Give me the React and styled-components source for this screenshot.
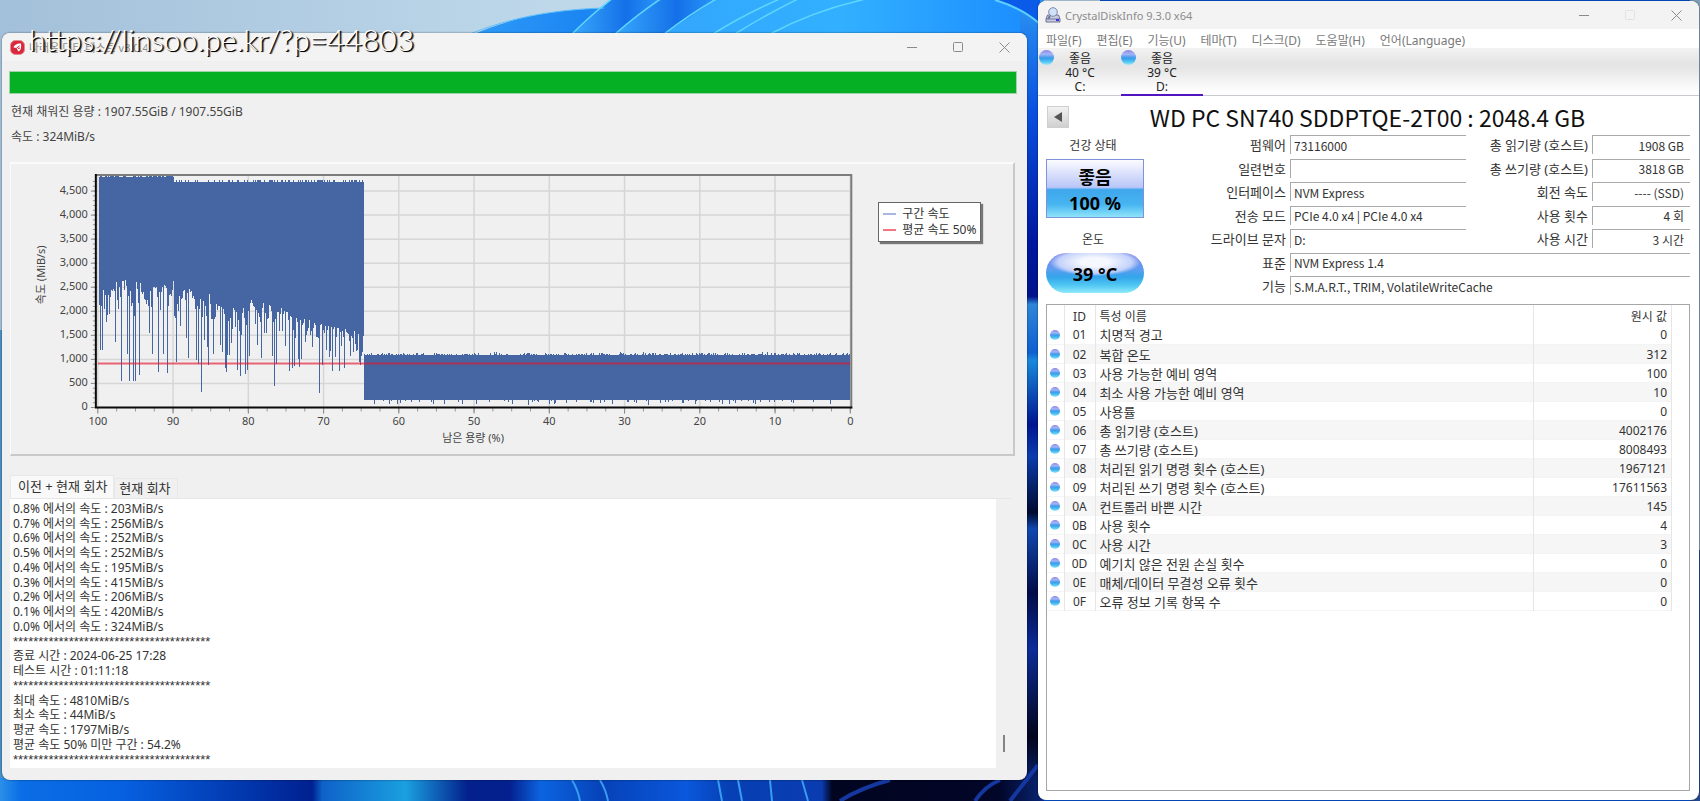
import React, { useState } from "react";
import styled, { createGlobalStyle } from "styled-components";

const FONT = '"Noto Sans", "Noto Sans CJK KR", sans-serif';
// Narrower latin letters
const FONT_NARROW = '"Noto Sans CJK KR", "Noto Sans", sans-serif';

const GlobalStyle = createGlobalStyle`
  * {
    box-sizing: border-box;
  }
  body {
    margin: 0;
    font-family: ${FONT};
    font-size: 12px;
    color: #333;
    background: #0453d6;
  }
  button, input {
    font-family: inherit;
    font-size: inherit;
    color: inherit;
    border: 0;
    margin: 0;
    padding: 0;
    background: none;
    outline: none;
  }
`;

const Desktop = styled.main`
  position: relative;
  display: grid;
  grid-template-columns: 1025fr 661fr;
  column-gap: 11px;
  min-height: 100vh;
  padding: 1px 1px 1px 2px;
  overflow: hidden;
`;

// Sits behind the windows
const WallpaperSvg = styled.svg`
  position: absolute;
  inset: 0;
  width: 100%;
  height: 100%;
`;

const Window = styled.section`
  position: relative;
  display: flex;
  flex-direction: column;
  min-width: 0;
  border-radius: 8px;
  overflow: hidden;
  background: ${(props) => props.$bg};
  box-shadow: 0 0 2px rgba(0, 0, 0, 0.6);
`;

const TestWindow = styled(Window)`
  margin: 32px 0 20px;
  padding-bottom: 12px;
`;

const TitleBar = styled.header`
  display: flex;
  align-items: center;
  gap: 4px;
  height: 28px;
  padding-left: ${(props) => props.$left};
  background: #f3f3f3;
  color: #8c8c8c;
`;

const TitleText = styled.h1`
  flex: 1;
  margin: 0;
  font-size: 11px;
  font-weight: 400;
  white-space: nowrap;
`;

const ButtonGroup = styled.div`
  display: flex;
`;

const WindowButton = styled.button`
  display: flex;
  align-items: center;
  justify-content: center;
  width: 46px;
  height: 28px;
  color: #8a8a8a;
  &:disabled {
    color: #e2e2e2;
  }
`;

// Link lies over the title bar of the window
const Watermark = styled.a`
  position: absolute;
  z-index: 2;
  left: 29px;
  top: 21px;
  font-family: Lato, "Open Sans", sans-serif;
  font-size: 30px;
  font-weight: 300;
  line-height: 36px;
  color: #fff;
  text-decoration: none;
  text-shadow: 1px 1px 0 #000, 2px 1px 1px #333;
`;

/* ---- dirty test window ---- */

const Progress = styled.progress`
  display: block;
  appearance: none;
  width: auto;
  height: 23px;
  margin: 10px 10px 5px 7px;
  border: 1px solid #9fd3a9;
  &::-webkit-progress-bar {
    background: #e6e6e6;
  }
  &::-webkit-progress-value {
    background: #06b025;
  }
`;

const StatusLine = styled.p`
  margin: 0 9px;
  line-height: 25px;
  color: #444;
`;

const ChartPanel = styled.div`
  display: grid;
  grid-template-columns: 860fr 144fr;
  margin: 13px 12px 0 8px;
  border-top: 2px solid #fafafa;
  border-left: 1px solid #fafafa;
  border-right: 2px solid #c9c9c9;
  border-bottom: 2px solid #c9c9c9;
`;

const ChartSvg = styled.svg`
  display: block;
  width: 100%;
  text {
    font-family: ${FONT};
    font-size: 11px;
    fill: #444;
  }
`;

const Legend = styled.ul`
  justify-self: start;
  align-self: start;
  display: flex;
  flex-direction: column;
  list-style: none;
  margin: 38px 0 0 9px;
  padding: 3px 4px;
  background: #fff;
  border: 1px solid #666;
  box-shadow: 2px 2px 1px #777;
`;

const LegendItem = styled.li`
  display: flex;
  align-items: center;
  gap: 6px;
  line-height: 16px;
  white-space: nowrap;
  &::before {
    content: "";
    width: 13px;
    height: 2px;
    background: ${(props) => props.$color};
  }
`;

const Tabs = styled.div`
  display: flex;
  align-items: flex-end;
  margin: 19px 0 0 8px;
`;

const Tab = styled.button`
  height: ${(props) => (props.$active ? "23px" : "20px")};
  padding: 0 6px 2px ${(props) => (props.$active ? "7px" : "4px")};
  background: ${(props) => (props.$active ? "#f9f9f9" : "#f0f0f0")};
  border: 1px solid #e8e8e8;
  border-bottom: 0;
  font-size: 13px;
  line-height: 16px;
  white-space: nowrap;
`;

const LogBox = styled.div`
  flex: 1;
  display: flex;
  margin: 0 15px 0 8px;
  border-top: 1px solid #e6e6e6;
  background: #fff;
`;

const Log = styled.div`
  flex: 1;
  display: grid;
  grid-auto-rows: 1fr;
  align-items: center;
  padding: 2px 3px 1px;
  white-space: nowrap;
`;

const LogLine = styled.div`
  line-height: 14px;
`;

const LogRule = styled(LogLine)`
  font-family: "Liberation Sans", sans-serif;
  font-size: 13px;
`;

const ScrollTrack = styled.div`
  display: flex;
  flex-direction: column;
  align-items: center;
  justify-content: flex-end;
  width: 16px;
  padding-bottom: 16px;
  background: #f0f0f0;
`;

const ScrollThumb = styled.div`
  width: 2px;
  height: 17px;
  background: #858585;
`;

/* ---- disk info window ---- */

const MenuBar = styled.nav`
  display: flex;
  gap: 15px;
  height: 19px;
  padding-left: 8px;
  background: #fff;
`;

const MenuButton = styled.button`
  color: #7a7a7a;
  line-height: 24px;
  white-space: nowrap;
`;

const DiskBar = styled.div`
  display: flex;
  height: 48px;
  padding-left: 1px;
  background: linear-gradient(#f2f2f2, #e4e4e4 35%, #e9e9e9 50%, #fbfbfb 85%, #fff);
  border-bottom: 1px solid #c8ccd0;
`;

const DiskButton = styled.button`
  display: grid;
  grid-template-columns: 15px 1fr 15px;
  align-items: start;
  width: 82px;
  border-bottom: 2px solid ${(props) => (props.$active ? "#5213c0" : "transparent")};
  margin-bottom: -1px;
  color: #222;
`;

const DiskText = styled.span`
  padding-top: 4px;
  line-height: 14px;
  white-space: nowrap;
`;

const Orb = styled.span`
  display: inline-block;
  width: ${(props) => props.$size};
  height: ${(props) => props.$size};
  margin-top: ${(props) => props.$top || "0"};
  border-radius: 50%;
  background: linear-gradient(#8e84e4, #a3b6f6 28%, #4f9cec 48%, #35a2ea 58%, #5acbf5 82%, #a8e8fa);
`;

const DriveHead = styled.div`
  display: grid;
  grid-template-columns: 22px 1fr;
  align-items: center;
  height: 39px;
  padding: 2px 23px 0 9px;
`;

const PrevButton = styled.button`
  display: flex;
  align-items: center;
  justify-content: center;
  height: 22px;
  border: 1px solid #cfcfcf;
  background: linear-gradient(#f2f2f2, #d0d0d0);
`;

const DriveName = styled.h2`
  margin: 0;
  padding-right: 10px;
  font-family: ${FONT_NARROW};
  font-size: 23px;
  font-weight: 400;
  line-height: 30px;
  text-align: center;
  color: #111;
  white-space: nowrap;
`;

const Overview = styled.div`
  display: grid;
  grid-template-columns: 98px 1fr;
  height: 165px;
  padding: 0 9px 0 8px;
`;

const Health = styled.div`
  display: flex;
  flex-direction: column;
  text-align: center;
`;

const HealthLabel = styled.div`
  height: ${(props) => props.$height};
  line-height: ${(props) => props.$line};
  padding-right: 4px;
`;

const HealthBadge = styled.div`
  height: 59px;
  padding: 4px 0;
  border: 1px solid #7f93d8;
  background: linear-gradient(#fbfbff, #b9c6f8 48%, #3fa6ec 52%, #47b5f0 78%, #8fe4fa);
  color: #000;
  font-size: 18px;
  font-weight: 700;
  line-height: 26px;
`;

const TempBadge = styled.div`
  height: 40px;
  border-radius: 20px;
  background: radial-gradient(ellipse 46px 14px at 50% 9px, #f6f8ff 30%, #c3d2fb 80%, transparent),
    linear-gradient(#7d7fe4, #5f9df0 40%, #33a5ea 60%, #4fc6f3 80%, #8feafa);
  color: #000;
  font-size: 18px;
  font-weight: 700;
  line-height: 42px;
`;

const Fields = styled.div`
  display: grid;
  grid-template-columns: 146px 176px 126px 1fr;
  grid-template-rows: repeat(7, 1fr);
`;

const FieldLabel = styled.label`
  align-self: start;
  padding-right: 4px;
  font-size: 13px;
  line-height: 20px;
  text-align: right;
  white-space: nowrap;
`;

const FieldInput = styled.input`
  grid-column: ${(props) => (props.$wide ? "span 3" : "auto")};
  min-width: 0;
  width: 100%;
  height: 19px;
  padding: 0 ${(props) => (props.$right ? "6px" : "3px")};
  border-top: 1px solid #a9a9a9;
  border-left: 1px solid #a9a9a9;
  font-family: ${FONT_NARROW};
  text-align: ${(props) => (props.$right ? "right" : "left")};
`;

const TableBox = styled.div`
  flex: 1;
  margin: 4px 9px 9px 8px;
  border: 1px solid #a6a6a6;
`;

const Table = styled.table`
  width: calc(100% - 17px);
  table-layout: fixed;
  border-collapse: collapse;
`;

const HeadCell = styled.th`
  width: ${(props) => props.$width || "auto"};
  height: 20px;
  padding: 3px 4px 0;
  border-right: 1px solid #e6e6e6;
  font-weight: 400;
  line-height: 16px;
  text-align: ${(props) => props.$align || "left"};
`;

const Row = styled.tr`
  border-bottom: 1px solid #f4f4f4;
  td:not(:first-child) {
    background: ${(props) => (props.$odd ? "#f6f6f6" : "#fff")};
  }
`;

const Cell = styled.td`
  height: 19px;
  padding: 2px 4px 0;
  border-right: 1px solid #e6e6e6;
  font-size: ${(props) => props.$size || "12px"};
  line-height: 16px;
  text-align: ${(props) => props.$align || "left"};
  white-space: nowrap;
`;

const OrbCell = styled(Cell)`
  padding: 1px 3px 0;
  line-height: 0;
`;

const STARS = "*".repeat(39);

const LOG = [
  "0.8% 에서의 속도 : 203MiB/s",
  "0.7% 에서의 속도 : 256MiB/s",
  "0.6% 에서의 속도 : 252MiB/s",
  "0.5% 에서의 속도 : 252MiB/s",
  "0.4% 에서의 속도 : 195MiB/s",
  "0.3% 에서의 속도 : 415MiB/s",
  "0.2% 에서의 속도 : 206MiB/s",
  "0.1% 에서의 속도 : 420MiB/s",
  "0.0% 에서의 속도 : 324MiB/s",
  STARS,
  "종료 시간 : 2024-06-25 17:28",
  "테스트 시간 : 01:11:18",
  STARS,
  "최대 속도 : 4810MiB/s",
  "최소 속도 : 44MiB/s",
  "평균 속도 : 1797MiB/s",
  "평균 속도 50% 미만 구간 : 54.2%",
  STARS,
];

const MENUS = ["파일(F)", "편집(E)", "기능(U)", "테마(T)", "디스크(D)", "도움말(H)", "언어(Language)"];

const DISKS = [
  { temp: "40 °C", letter: "C:" },
  { temp: "39 °C", letter: "D:" },
];

const FIELDS = [
  ["펌웨어", "73116000"],
  ["총 읽기량 (호스트)", "1908 GB", "right"],
  ["일련번호", ""],
  ["총 쓰기량 (호스트)", "3818 GB", "right"],
  ["인터페이스", "NVM Express"],
  ["회전 속도", "---- (SSD)", "right"],
  ["전송 모드", "PCIe 4.0 x4 | PCIe 4.0 x4"],
  ["사용 횟수", "4 회", "right"],
  ["드라이브 문자", "D:"],
  ["사용 시간", "3 시간", "right"],
  ["표준", "NVM Express 1.4", "wide"],
  ["기능", "S.M.A.R.T., TRIM, VolatileWriteCache", "wide"],
];

const SMART = [
  ["01", "치명적 경고", "0"],
  ["02", "복합 온도", "312"],
  ["03", "사용 가능한 예비 영역", "100"],
  ["04", "최소 사용 가능한 예비 영역", "10"],
  ["05", "사용률", "0"],
  ["06", "총 읽기량 (호스트)", "4002176"],
  ["07", "총 쓰기량 (호스트)", "8008493"],
  ["08", "처리된 읽기 명령 횟수 (호스트)", "1967121"],
  ["09", "처리된 쓰기 명령 횟수 (호스트)", "17611563"],
  ["0A", "컨트롤러 바쁜 시간", "145"],
  ["0B", "사용 횟수", "4"],
  ["0C", "사용 시간", "3"],
  ["0D", "예기치 않은 전원 손실 횟수", "0"],
  ["0E", "매체/데이터 무결성 오류 횟수", "0"],
  ["0F", "오류 정보 기록 항목 수", "0"],
];

/* ---- chart ---- */

// Plot frame inside the chart's viewBox
const X0 = 87;
const X1 = 841;
const Y0 = 244;
const TOP = 11;

const toX = (percent) => X1 - ((X1 - X0) * percent) / 100;
const toY = (speed) => Y0 - speed * 0.0482;

// Slowest writes, [percent left, MiB/s]
const DIPS = [
  [99.8, 1200], [99.5, 1190], [98.6, 1950], [97.8, 1370], [97, 550], [96.2, 1120],
  [95.9, 550], [95.4, 550], [95.1, 550], [94.5, 680], [93.3, 1540], [92.9, 1110],
  [92, 740], [91.4, 1120], [90.8, 720], [89.6, 940], [89.1, 1700], [88.3, 1450],
  [88.1, 1020], [87, 980], [86.7, 900], [86.3, 330], [86, 1400], [85.6, 1250],
  [85.4, 890], [84.8, 1110], [83.8, 1310], [83.6, 1160], [83.2, 830], [83, 740],
  [82.9, 1100], [82.6, 1090], [82.4, 1350], [81.5, 780], [81.2, 650], [81, 1500],
  [80.5, 690], [80.2, 780], [80, 1070], [78.9, 1300], [78.4, 1020], [77.8, 1540],
  [76.8, 1080], [76.5, 450], [76.3, 900], [75.1, 1280], [74.6, 760], [74.2, 830],
  [73.9, 860], [73.4, 1010], [73.2, 840], [73, 1010], [72.4, 1360], [71.8, 1500],
  [70.6, 310], [70.2, 890], [69.6, 1200], [69.2, 1050], [68.8, 760], [68.5, 1050],
  [67.9, 760], [67.2, 830], [66.5, 1070], [65.7, 1170], [65.3, 950], [65.1, 890],
  [64.8, 1150],
];

// Highest points of the lower edge, [percent left, MiB/s]
const CREST = [
  [99.9, 2200], [99.4, 2500], [99, 2300], [97.6, 2620], [96.4, 2660], [95.3, 2300],
  [95, 2750], [94.7, 2400], [94.4, 2620], [93.6, 2200], [93, 2580], [92, 2500],
  [91.3, 2570], [90.4, 2350], [90.1, 2780], [89.8, 2200], [89.4, 2300], [88.6, 2450],
  [87.7, 2490], [86.9, 2200], [86.2, 2300], [85.5, 2050], [85.2, 2600], [84.8, 2150],
  [84.4, 2150], [83.7, 2100], [82.7, 1900], [82, 2220], [81.4, 1900], [81.1, 2370],
  [80.6, 2050], [79.8, 2270], [79, 2050], [78.2, 2210], [77.1, 2140], [76.5, 1900],
  [75.6, 2080], [74.9, 2010], [73.9, 1900], [72.8, 1860], [71.2, 1780], [69.8, 1790],
  [68.3, 1680], [66.6, 1640], [64.6, 1600],
];

const makeRandom = (start) => {
  let seed = start;
  return () => {
    seed = (seed * 16807) % 2147483647;
    return seed / 2147483647;
  };
};

const crestAt = (percent) => {
  const i = CREST.findIndex(([p]) => p <= percent);
  if (i <= 0) return CREST[0][1];
  const [pa, a] = CREST[i - 1];
  const [pb, b] = CREST[i];
  return a + ((b - a) * (pa - percent)) / (pa - pb);
};

const buildBars = () => {
  const random = makeRandom(4803);
  let d = "";
  for (let x = X0 + 1; x < X1; x++) {
    const percent = ((X1 - x) / (X1 - X0)) * 100;
    let high;
    let low;
    if (percent > 64.6) {
      high = percent > 90 ? 4790 + random() * 30 : 4670 + (random() > 0.6 ? 50 : 10);
      low = crestAt(percent) - random() * random() * 700;
      const dip = DIPS.find(([p]) => Math.abs(p - percent) < 0.067);
      if (dip) low = dip[1];
    } else {
      high = 1085 + random() * random() * 70;
      low = random() > 0.85 ? 60 + random() * 90 : 165;
    }
    d += `M${x + 0.5} ${toY(high).toFixed(1)}V${toY(low).toFixed(1)}`;
  }
  return d;
};

const BARS = buildBars();
const TENS = [0, 10, 20, 30, 40, 50, 60, 70, 80, 90, 100];
const SPEEDS = [0, 500, 1000, 1500, 2000, 2500, 3000, 3500, 4000, 4500];

const SpeedChart = () => (
  <ChartSvg viewBox="0 0 860 291" role="img" aria-label="구간 속도">
    {SPEEDS.map((s) => (
      <g key={s}>
        <path d={`M${X0} ${toY(s)}H${X1}`} stroke="#d6d6d6" strokeWidth="1.5" />
        <path d={`M${X0 - 7} ${toY(s)}h6`} stroke="#888" />
        <text x="77" y={toY(s) + 3} textAnchor="end">
          {s.toLocaleString("en-US")}
        </text>
      </g>
    ))}
    {TENS.map((p) => (
      <g key={p}>
        <path d={`M${toX(p)} ${TOP}V${Y0}`} stroke="#d6d6d6" strokeWidth="1.5" />
        <path d={`M${toX(p)} ${Y0}v6`} stroke="#777" />
        <text x={toX(p)} y="262" textAnchor="middle">
          {p}
        </text>
      </g>
    ))}
    {Array.from({ length: 48 }, (_, i) => (
      <path key={i} d={`M${X0 - 5} ${toY(i * 100)}h4`} stroke="#999" />
    ))}
    {Array.from({ length: 40 }, (_, i) => (
      <path key={i} d={`M${toX(i * 2.5)} ${Y0}v4`} stroke="#999" />
    ))}
    <path d={BARS} stroke="#4465a3" strokeWidth="1" shapeRendering="crispEdges" />
    <path d={`M${X0} 200H${X1}`} stroke="#e01830" strokeOpacity="0.65" strokeWidth="2" />
    <path d={`M${X0 - 2} ${TOP}H${X1 + 1}V${Y0 + 1}`} fill="none" stroke="#7c7c7c" strokeWidth="2" />
    <path d={`M${X0 - 2} ${TOP - 1}V${Y0}H${X1 + 2}`} fill="none" stroke="#0a0a0a" strokeWidth="2" />
    <text x="463" y="279" textAnchor="middle">
      남은 용량 (%)
    </text>
    <text transform="translate(34 111) rotate(-90)" textAnchor="middle">
      속도 (MiB/s)
    </text>
  </ChartSvg>
);

const Wallpaper = () => (
  <WallpaperSvg viewBox="0 0 1700 801" preserveAspectRatio="none" aria-hidden="true">
    <defs>
      <linearGradient id="sky">
        <stop offset="0" stopColor="#a3c0da" />
        <stop offset="0.5" stopColor="#bed8ea" />
      </linearGradient>
      <linearGradient id="petal">
        <stop offset="0" stopColor="#2f9bf8" />
        <stop offset="0.2" stopColor="#1b86f2" />
        <stop offset="0.35" stopColor="#33a7fd" />
        <stop offset="0.65" stopColor="#32b0ff" />
        <stop offset="1" stopColor="#1a8cff" />
      </linearGradient>
      <linearGradient id="fold">
        <stop offset="0" stopColor="#38a8fc" />
        <stop offset="0.6" stopColor="#1470e8" />
        <stop offset="1" stopColor="#2b98fa" />
      </linearGradient>
      <linearGradient id="edge" x2="0" y2="1">
        <stop offset="0" stopColor="#2b95f2" />
        <stop offset="0.14" stopColor="#0a50e0" />
        <stop offset="0.3" stopColor="#0018a0" />
        <stop offset="0.37" stopColor="#00138c" />
        <stop offset="0.38" stopColor="#2f86d8" />
        <stop offset="0.44" stopColor="#0f5fd0" />
        <stop offset="0.45" stopColor="#1988dc" />
        <stop offset="0.53" stopColor="#001690" />
        <stop offset="0.57" stopColor="#0c3cae" />
        <stop offset="0.64" stopColor="#000a30" />
        <stop offset="0.66" stopColor="#1048b0" />
        <stop offset="0.74" stopColor="#020c48" />
        <stop offset="0.81" stopColor="#0c2c98" />
        <stop offset="0.92" stopColor="#02051c" />
        <stop offset="1" stopColor="#0a2c90" />
      </linearGradient>
      <linearGradient id="floor">
        <stop offset="0" stopColor="#2a90e8" />
        <stop offset="0.02" stopColor="#0a6ee6" />
        <stop offset="0.12" stopColor="#0660e0" />
        <stop offset="0.3" stopColor="#002090" />
        <stop offset="0.31" stopColor="#0e62c8" />
        <stop offset="0.39" stopColor="#1aa0e0" />
        <stop offset="0.45" stopColor="#03208c" />
        <stop offset="0.49" stopColor="#04208e" />
        <stop offset="0.52" stopColor="#0c64e0" />
        <stop offset="0.58" stopColor="#0642b8" />
        <stop offset="0.66" stopColor="#0a58dc" />
        <stop offset="0.7" stopColor="#0640b4" />
        <stop offset="0.79" stopColor="#0a3cb0" />
        <stop offset="0.8" stopColor="#020520" />
        <stop offset="0.96" stopColor="#020628" />
        <stop offset="1" stopColor="#08236e" />
      </linearGradient>
    </defs>
    <rect width="1100" height="400" fill="url(#sky)" />
    <rect y="330" width="10" height="480" fill="#4a90c8" />
    <path d="M470 36C500 22 540 10 604 8L612 0H1040V36Z" fill="url(#petal)" />
    <path d="M572 34L613 -2H662L615 34Z" fill="url(#fold)" />
    <path d="M615 34L662 -2H718L664 34Z" fill="url(#fold)" />
    <path d="M470 34C500 22 540 10 604 8" fill="none" stroke="#5cc0fa" />
    <g fill="none" stroke="#5fd6fb" strokeWidth="1.5">
      <path d="M572 34Q592 14 613 -2" />
      <path d="M615 34Q638 14 662 -2" />
      <path d="M664 34Q690 14 718 -2" />
      <path d="M713 34Q745 14 782 -2" />
      <path d="M735 34Q765 15 800 -2" />
      <path d="M770 34Q815 10 870 -2" />
    </g>
    <rect x="1020" width="24" height="801" fill="url(#edge)" />
    <path d="M995 0Q1022 8 1040 24V0Z" fill="#0a5ce8" />
    <path d="M995 0Q1022 8 1040 24" fill="none" stroke="#5cd0fa" strokeWidth="2" />
    <rect y="778" width="1040" height="23" fill="url(#floor)" />
    <g fill="none" stroke="#3a9cf0" strokeWidth="2">
      <path d="M572 780Q578 790 580 801" />
      <path d="M600 780Q606 790 608 801" />
      <path d="M718 780L722 801" />
      <path d="M738 780L742 801" />
      <path d="M770 780L772 801" />
      <path d="M802 780L808 801" />
    </g>
    <path d="M840 801Q860 788 890 780M975 801Q985 786 1000 780M1010 801Q1025 782 1038 765" fill="none" stroke="#1438a0" strokeWidth="4" />
    <rect x="1690" width="10" height="550" fill="#7f9db8" />
    <rect x="1690" y="550" width="10" height="251" fill="#24488f" />
  </WallpaperSvg>
);

const WindowButtons = ({ noMaximize }) => (
  <ButtonGroup>
    <WindowButton aria-label="최소화">
      <svg width="11" height="11" stroke="currentColor">
        <path d="M0 5.5H10" />
      </svg>
    </WindowButton>
    <WindowButton aria-label="최대화" disabled={noMaximize}>
      <svg width="11" height="11" fill="none" stroke="currentColor">
        <rect x="0.5" y="0.5" width="9" height="9" rx="1" />
      </svg>
    </WindowButton>
    <WindowButton aria-label="닫기">
      <svg width="11" height="11" stroke="currentColor">
        <path d="M0.5 0.5L10.5 10.5M10.5 0.5L0.5 10.5" />
      </svg>
    </WindowButton>
  </ButtonGroup>
);

const TestIcon = () => (
  <svg width="15" height="15" viewBox="0 0 15 15" aria-hidden="true">
    <rect x="0.5" y="0.5" width="14" height="14" rx="5" fill="#d8283c" stroke="#e88a90" />
    <path d="M11 3.5C7.5 3 4 5 3.5 7.5L6.5 8L8.5 11.5C11 10.5 11.5 7 11 3.5Z" fill="#fff" />
    <path d="M6.5 8L9.5 6M8 8.5L10 8" stroke="#d8283c" fill="none" />
  </svg>
);

const DiskIcon = () => (
  <svg width="16" height="16" viewBox="0 0 16 16" aria-hidden="true">
    <path d="M2.5 8L1 12V15H15V12L13.5 8Z" fill="#c9cbe0" stroke="#6e7090" />
    <circle cx="8" cy="5" r="4.3" fill="#cfe2f8" stroke="#7c88ac" />
    <path d="M5 9L3 12" stroke="#6c7294" strokeWidth="2" />
    <path d="M1 12H15" stroke="#74769a" />
    <rect x="11" y="12" width="3" height="2" fill="#3a36e0" />
  </svg>
);

const DirtyTest = () => {
  const [tab, setTab] = useState(0);

  return (
    <TestWindow $bg="#f0f0f0">
      <TitleBar $left="8px">
        <TestIcon />
        <TitleText>나래온 더티 테스트 v3.0.4</TitleText>
        <WindowButtons />
      </TitleBar>
      <Progress value="100" max="100" aria-label="진행률" />
      <StatusLine>현재 채워진 용량 : 1907.55GiB / 1907.55GiB</StatusLine>
      <StatusLine>속도 : 324MiB/s</StatusLine>
      <ChartPanel>
        <SpeedChart />
        <Legend>
          <LegendItem $color="#a9b8dc">구간 속도</LegendItem>
          <LegendItem $color="#f07880">평균 속도 50%</LegendItem>
        </Legend>
      </ChartPanel>
      <Tabs role="tablist">
        {["이전 + 현재 회차", "현재 회차"].map((label, i) => (
          <Tab key={label} role="tab" aria-selected={tab === i} $active={tab === i} onClick={() => setTab(i)}>
            {label}
          </Tab>
        ))}
      </Tabs>
      <LogBox>
        <Log role="log" aria-label="테스트 기록">
          {LOG.map((line, i) =>
            line === STARS ? <LogRule key={i}>{line}</LogRule> : <LogLine key={i}>{line}</LogLine>
          )}
        </Log>
        <ScrollTrack>
          <ScrollThumb />
        </ScrollTrack>
      </LogBox>
    </TestWindow>
  );
};

const DiskInfo = () => {
  const [disk, setDisk] = useState(1);

  return (
    <Window $bg="#fff">
      <TitleBar $left="7px">
        <DiskIcon />
        <TitleText>CrystalDiskInfo 9.3.0 x64</TitleText>
        <WindowButtons noMaximize />
      </TitleBar>
      <MenuBar>
        {MENUS.map((menu) => (
          <MenuButton key={menu}>{menu}</MenuButton>
        ))}
      </MenuBar>
      <DiskBar>
        {DISKS.map((d, i) => (
          <DiskButton key={d.letter} $active={disk === i} onClick={() => setDisk(i)}>
            <Orb $size="15px" $top="2px" />
            <DiskText>
              좋음
              <br />
              {d.temp}
              <br />
              {d.letter}
            </DiskText>
          </DiskButton>
        ))}
      </DiskBar>
      <DriveHead>
        <PrevButton aria-label="이전 디스크">
          <svg width="10" height="12">
            <path d="M9 1V11L1 6Z" fill="#555" />
          </svg>
        </PrevButton>
        <DriveName>WD PC SN740 SDDPTQE-2T00 : 2048.4 GB</DriveName>
      </DriveHead>
      <Overview>
        <Health>
          <HealthLabel $height="24px" $line="22px">건강 상태</HealthLabel>
          <HealthBadge>
            좋음
            <br />
            100 %
          </HealthBadge>
          <HealthLabel $height="35px" $line="44px">온도</HealthLabel>
          <TempBadge>39 °C</TempBadge>
        </Health>
        <Fields>
          {FIELDS.map(([label, value, kind], i) => (
            <React.Fragment key={label}>
              <FieldLabel htmlFor={`field-${i}`}>{label}</FieldLabel>
              <FieldInput
                id={`field-${i}`}
                readOnly
                value={value}
                $right={kind === "right"}
                $wide={kind === "wide"}
              />
            </React.Fragment>
          ))}
        </Fields>
      </Overview>
      <TableBox>
        <Table>
          <thead>
            <tr>
              <HeadCell $width="17px" aria-label="상태" />
              <HeadCell $width="31px" $align="center">ID</HeadCell>
              <HeadCell>특성 이름</HeadCell>
              <HeadCell $width="138px" $align="right">원시 값</HeadCell>
            </tr>
          </thead>
          <tbody>
            {SMART.map(([id, name, raw], i) => (
              <Row key={id} $odd={i % 2 === 1}>
                <OrbCell>
                  <Orb $size="10px" />
                </OrbCell>
                <Cell $align="center">{id}</Cell>
                <Cell $size="13px">{name}</Cell>
                <Cell $align="right">{raw}</Cell>
              </Row>
            ))}
          </tbody>
        </Table>
      </TableBox>
    </Window>
  );
};

const App = () => (
  <>
    <GlobalStyle />
    <Desktop>
      <Wallpaper />
      <DirtyTest />
      <DiskInfo />
      <Watermark href="https://linsoo.pe.kr/?p=44803">https://linsoo.pe.kr/?p=44803</Watermark>
    </Desktop>
  </>
);

export default App;
